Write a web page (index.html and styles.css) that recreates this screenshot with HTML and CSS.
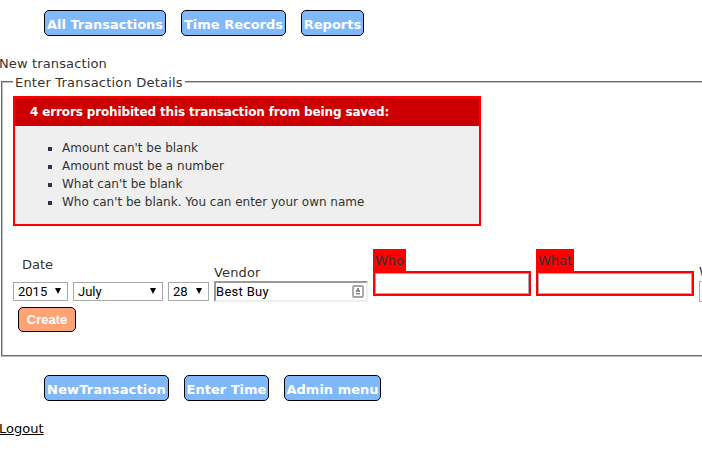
FILE: index.html
```html
<!DOCTYPE html>
<html lang="en">
<head>
<meta charset="utf-8">
<title>New transaction</title>
<link rel="stylesheet" href="styles.css">
</head>
<body>
<nav class="nav">
  <a class="w-all">All Transactions</a><a class="w-time">Time Records</a><a class="w-rep">Reports</a>
</nav>
<h1 class="title"><span>New transaction</span></h1>
<fieldset class="panel">
  <legend><span>Enter Transaction Details</span></legend>
  <section class="errors">
    <h2><span>4 errors prohibited this transaction from being saved:</span></h2>
    <ul>
      <li><span>Amount can't be blank</span></li>
      <li><span>Amount must be a number</span></li>
      <li><span>What can't be blank</span></li>
      <li><span>Who can't be blank. You can enter your own name</span></li>
    </ul>
  </section>
  <form class="form">
    <div class="row">
      <div class="date">
        <label>Date</label>
        <div class="selects">
          <div class="select year"><span>2015</span><i></i></div>
          <div class="select month"><span>July</span><i></i></div>
          <div class="select day"><span>28</span><i></i></div>
        </div>
      </div>
      <div class="vendor">
        <label>Vendor</label>
        <div class="input"><span>Best Buy</span>
          <svg width="12" height="13" viewBox="0 0 12 13"><rect x="1" y="1" width="10" height="11" rx="1" fill="#fff" stroke="#888" stroke-width="1.4"/><path d="M5 3h2v2h1v2H4V5h1zM4 8h4v1.5H4z" fill="#888"/></svg>
        </div>
      </div>
      <div class="bad"><label>Who</label><div class="frame"><div></div></div></div>
      <div class="bad what"><label>What</label><div class="frame"><div></div></div></div>
      <div class="next"><label>W</label><div></div></div>
    </div>
    <button type="button" class="create">Create</button>
  </form>
</fieldset>
<nav class="nav bottom">
  <a class="w-new">NewTransaction</a><a class="w-enter">Enter Time</a><a class="w-admin">Admin menu</a>
</nav>
<a class="logout">Logout</a>
</body>
</html>
```

FILE: styles.css
```css
* { box-sizing: border-box; }
html { overflow: hidden; }
body {
  margin: 0;
  width: 702px;
  height: 459px;
  overflow: hidden;
  background: #fff;
  color: #333;
  font: 13px/18px "DejaVu Sans", Verdana, sans-serif;
}
.nav { display: flex; gap: 15px; padding: 10px 0 0 44px; }
.nav a {
  height: 26px;
  padding-top: 5px;
  border: 1px solid #000;
  border-radius: 5px;
  background: #80b9fb;
  color: #fff;
  font-weight: bold;
  text-align: center;
  white-space: nowrap;
}
.w-all { width: 122px; }
.w-time { width: 105px; }
.w-rep { width: 63px; }
.w-new { width: 125px; letter-spacing: 0.15px; }
.w-enter { width: 85px; }
.w-admin { width: 97px; }
.title { margin: 19px 0 0 -1px; font-size: 13px; font-weight: normal; letter-spacing: 0.13px; }
.panel {
  width: 703px;
  height: 284px;
  margin: 0 0 0 1px;
  padding: 5px 0 0 10px;
  border: 2px groove #c0c0c0;
  border-right: 0;
}
.panel legend { margin-left: 0; padding: 0 2px; letter-spacing: 0.21px; }
.panel legend span { position: relative; top: 1px; }
.errors {
  width: 468px;
  height: 130px;
  border: 2px solid #f00;
  background: #efefef;
  font-size: 12px;
}
.errors h2 {
  height: 28px;
  margin: 0;
  padding: 5px 0 0 15px;
  background: #c00;
  color: #fff;
  font-size: 12px;
  line-height: 18px;
  letter-spacing: -0.14px;
}
.errors ul { margin: 13px 0 0; padding: 0 0 0 47px; list-style: square; }
.row { display: flex; align-items: flex-start; padding-top: 23px; height: 79px; }
.row label { display: block; height: 18px; }
.date { width: 201px; flex: none; padding-top: 7px; }
.date label { padding-left: 9px; }
.selects { display: flex; gap: 5px; margin-top: 8px; }
.select {
  display: flex;
  justify-content: space-between;
  height: 19px;
  padding: 0 6px 0 4px;
  border: 1px solid #a9a9a9;
  color: #000;
  font-family: Roboto, Arial, sans-serif;
  line-height: 18px;
}
.select i {
  margin-top: 5px;
  width: 6px;
  height: 6px;
  background: #000;
  clip-path: polygon(0 0, 100% 0, 50% 100%);
}
.year { width: 55px; }
.month { width: 90px; }
.day { width: 41px; }
.vendor { width: 159px; flex: none; padding-top: 15px; }
.vendor label { height: 17px; letter-spacing: 0.15px; }
.input {
  display: flex;
  justify-content: space-between;
  width: 154px;
  height: 21px;
  border: 2px solid;
  border-color: #999 #eee #eee #999;
  color: #000;
  font-family: Roboto, Arial, sans-serif;
  letter-spacing: 0.3px;
  line-height: 18px;
}
.input svg { margin: 2px 2px 0 0; }
.bad { width: 163px; flex: none; }
.bad label { width: 33px; height: 22px; padding: 3px 0 0 2px; background: #f00; }
.what label { width: 38px; }
.frame { width: 158px; height: 25px; padding: 2px; background: #f00; }
.frame div { height: 21px; border: 1px solid #a9a9a9; background: #fff; }
.next { flex: 1; min-width: 0; overflow: hidden; padding-top: 14px; }
.next div { height: 21px; border: 1px solid #a9a9a9; border-right: 0; }
.create {
  display: block;
  width: 58px;
  height: 25px;
  margin: 2px 0 0 5px;
  padding: 0;
  border: 1px solid #000;
  border-radius: 5px;
  background: #ffa376;
  color: #fff;
  font: bold 13px "Liberation Sans", Arial, sans-serif;
}
.bottom { padding-top: 18px; }
.logout { display: inline-block; margin: 19px 0 0 -1px; color: #000; text-decoration: underline; }
```
